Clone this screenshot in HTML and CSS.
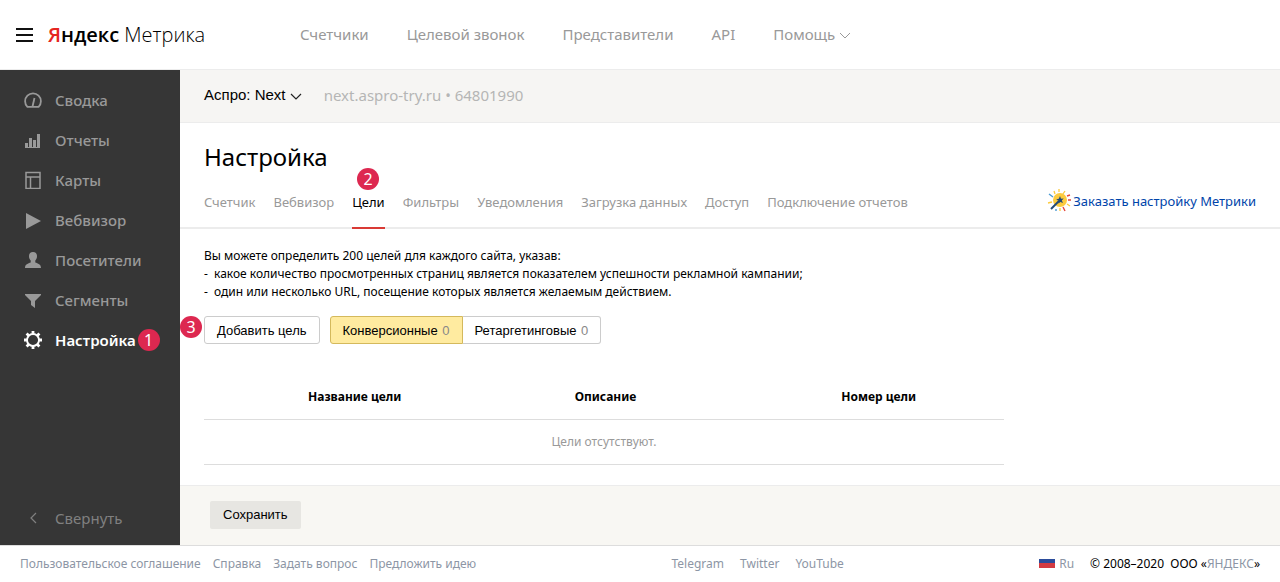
FILE: index.html
```html
<!DOCTYPE html>
<html lang="ru">
<head>
  <meta charset="UTF-8">
  <meta name="viewport" content="width=device-width, initial-scale=1.0">
  <title>Яндекс Метрика</title>

  <link rel="stylesheet" href="styles.css">
</head>
<body>
  <header class="header">
    <button class="burger" type="button" aria-label="Меню">
      <svg width="17" height="16" viewBox="0 0 17 16"><path d="M0 2h17M0 8h17M0 14h17" stroke="#111" stroke-width="2"/></svg>
    </button>
    <a class="logo" href="#"><b><span class="logo-red">Я</span>ндекс</b> Метрика</a>
    <nav class="top-nav">
      <a href="#">Счетчики</a>
      <a href="#">Целевой звонок</a>
      <a href="#">Представители</a>
      <a href="#">API</a>
      <a href="#">Помощь <svg class="arrow" width="12" height="7" viewBox="0 0 12 7"><path d="M1 1l5 5 5-5" fill="none" stroke="#999" stroke-width="1"/></svg></a>
    </nav>
  </header>

  <div class="layout">
    <aside class="sidebar">
      <a class="side-item" href="#">
        <svg class="icon" viewBox="0 0 18 18"><path d="M3.400 15.800A7.900 7.900 0 1 1 14.600 15.800Z" fill="none" stroke="currentColor" stroke-width="1.800" stroke-linejoin="round"/><path d="M8.500 15.500l2-8.500" stroke="currentColor" stroke-width="1.800"/></svg>
        Сводка
      </a>
      <a class="side-item" href="#">
        <svg class="icon" viewBox="0 0 18 18"><path d="M1 12h3v5H1zM5 7h3v10H5zM9 9h3v8H9zM13 3h3v14h-3zM1 16h15v1H1z" fill="currentColor"/></svg>
        Отчеты
      </a>
      <a class="side-item" href="#">
        <svg class="icon" viewBox="0 0 18 18"><path d="M2 1.500h14v16H2zM2 6h14M6.500 6v11" fill="none" stroke="currentColor" stroke-width="1.500"/></svg>
        Карты
      </a>
      <a class="side-item" href="#">
        <svg class="icon" viewBox="0 0 18 18"><path d="M2 2l15 8-15 8z" fill="currentColor"/></svg>
        Вебвизор
      </a>
      <a class="side-item" href="#">
        <svg class="icon" viewBox="0 0 18 18"><path d="M9 1c2.600 0 4 1.700 4 4.200 0 2.200-.9 3.300-1.700 4.300v2c2.500 1 5.700 1.500 5.700 5.500H1c0-4 3.200-4.500 5.700-5.500v-2C5.900 8.500 5 7.400 5 5.200 5 2.700 6.400 1 9 1z" fill="currentColor"/></svg>
        Посетители
      </a>
      <a class="side-item" href="#">
        <svg class="icon" viewBox="0 0 18 18"><path d="M1 3h16v1l-6 6v7l-4-3v-4L1 4z" fill="currentColor"/></svg>
        Сегменты
      </a>
      <a class="side-item active" href="#">
        <svg class="icon" viewBox="0 0 18 18"><circle cx="9" cy="9" r="6" fill="none" stroke="currentColor" stroke-width="1.900"/><path d="M9 0v3M9 15v3M0 9h3M15 9h3M2.600 2.600l2 2M13.400 13.400l2 2M15.400 2.600l-2 2M4.600 13.400l-2 2" stroke="currentColor" stroke-width="2.800"/></svg>
        <span>Настройка</span>
        <span class="step">1</span>
      </a>
      <button class="side-item collapse" type="button">
        <svg class="icon" viewBox="0 0 18 18"><path d="M12 4L7 9l5 5" fill="none" stroke="currentColor" stroke-width="1.200"/></svg>
        Свернуть
      </button>
    </aside>

    <main class="main">
      <div class="counter-bar">
        <button class="counter" type="button">Аспро: Next <svg class="arrow" width="12" height="7" viewBox="0 0 12 7"><path d="M1 1l5 5 5-5" fill="none" stroke="#222" stroke-width="1.200"/></svg></button>
        <span class="counter-info">next.aspro-try.ru • 64801990</span>
      </div>

      <h1 class="title">Настройка</h1>
      <div class="tabs-row">
        <nav class="tabs">
          <a href="#">Счетчик</a>
          <a href="#">Вебвизор</a>
          <a class="current" href="#">Цели<span class="step step-tab">2</span></a>
          <a href="#">Фильтры</a>
          <a href="#">Уведомления</a>
          <a href="#">Загрузка данных</a>
          <a href="#">Доступ</a>
          <a href="#">Подключение отчетов</a>
        </nav>
        <a class="order" href="#">
          <svg width="24" height="24" viewBox="0 0 24 24"><circle cx="13" cy="11" r="7" fill="#fccb3f"/><path d="M12 0v3M18 2l-2 3M1 14l4-1M7 2l1 3M13 19v3M20 15l3 2" stroke="#fccb3f" stroke-width="1.300"/><path d="M23 6l-3 1M21 11h3M18 22l-2-4" stroke="#e5483d" stroke-width="1.400"/><path d="M2 5l4 3M9 20v2" stroke="#4a9ad4" stroke-width="1.400"/><path d="M4 20l8-8" stroke="#234a75" stroke-width="2"/><path d="M13 7l1 2.700 2.700-.3-1.900 2 1.200 2.500-2.600-1-2 1.600.1-2.700-2.300-1.400 2.600-.7z" fill="#234a75"/></svg>
          Заказать настройку Метрики
        </a>
      </div>

      <section class="content">
        <p class="intro">Вы можете определить 200 целей для каждого сайта, указав:</p>
        <ul class="intro-list">
          <li>какое количество просмотренных страниц является показателем успешности рекламной кампании;</li>
          <li>один или несколько URL, посещение которых является желаемым действием.</li>
        </ul>
        <div class="controls">
          <span class="step step-add">3</span>
          <button class="btn" type="button">Добавить цель</button>
          <div class="switch">
            <button class="btn checked" type="button">Конверсионные <span class="count">0</span></button>
            <button class="btn" type="button">Ретаргетинговые <span class="count">0</span></button>
          </div>
        </div>
        <table class="goals">
          <thead>
            <tr><th>Название цели</th><th>Описание</th><th>Номер цели</th></tr>
          </thead>
          <tbody>
            <tr><td colspan="3">Цели отсутствуют.</td></tr>
          </tbody>
        </table>
      </section>

      <div class="save-bar">
        <button class="save" type="button">Сохранить</button>
      </div>
    </main>
  </div>

  <footer class="footer">
    <nav class="footer-links">
      <a href="#">Пользовательское соглашение</a>
      <a href="#">Справка</a>
      <a href="#">Задать вопрос</a>
      <a href="#">Предложить идею</a>
    </nav>
    <nav class="footer-links social">
      <a href="#">Telegram</a>
      <a href="#">Twitter</a>
      <a href="#">YouTube</a>
    </nav>
    <div class="footer-right">
      <a class="lang" href="#"><span class="flag"></span>Ru</a>
      <span>© 2008–2020&nbsp; ООО «<a href="#">ЯНДЕКС</a>»</span>
    </div>
  </footer>
</body>
</html>
```

FILE: styles.css
```css
* {
  margin: 0;
  padding: 0;
  box-sizing: border-box;
}

body {
  min-height: 100vh;
  display: flex;
  flex-direction: column;
  background: #fff;
  color: #000;
  font-family: "Noto Sans", sans-serif;
  font-size: 12px;
}

a {
  color: inherit;
  text-decoration: none;
}

button {
  border: none;
  background: none;
  font-family: "Liberation Sans", Arial, sans-serif;
  cursor: pointer;
}

/* Header */
.header {
  display: flex;
  align-items: center;
  height: 70px;
  padding-left: 16px;
  border-bottom: 1px solid #ececec;
}

.burger {
  display: flex;
  margin-right: 15px;
}

.logo {
  flex: 0 0 252px;
  font-family: "Open Sans", sans-serif;
  font-size: 20px;
  font-weight: 300;
  white-space: nowrap;
}

.logo b {
  font-weight: 600;
}

.logo-red {
  color: #e52620;
}

.top-nav {
  display: flex;
  gap: 38px;
  padding-bottom: 1px;
  color: #999;
  font-size: 15px;
  white-space: nowrap;
}

.arrow {
  vertical-align: middle;
}

/* Sidebar */
.layout {
  display: flex;
  flex: 1;
}

.sidebar {
  display: flex;
  flex-direction: column;
  flex: 0 0 180px;
  padding: 10px 0 7px;
  background: #363636;
}

.side-item {
  display: flex;
  align-items: center;
  height: 40px;
  padding-left: 24px;
  color: #999;
  font-family: "Noto Sans", sans-serif;
  font-size: 15px;
  font-weight: 500;
}

.side-item.active {
  color: #fff;
  font-weight: 600;
}

.icon {
  width: 18px;
  height: 18px;
  margin-right: 13px;
}

.side-item.collapse {
  margin-top: auto;
  color: #808080;
  font-weight: 400;
}

/* Numbered step badges */
.step {
  display: flex;
  justify-content: center;
  align-items: center;
  width: 22px;
  height: 22px;
  border-radius: 50%;
  background: #dd2850;
  color: #fff;
  font-size: 16px;
  font-weight: 400;
}

.side-item .step {
  margin-left: 2px;
}

/* Main column */
.main {
  display: flex;
  flex: 1;
  flex-direction: column;
  min-width: 0;
}

.counter-bar {
  display: flex;
  align-items: center;
  gap: 22px;
  height: 53px;
  padding: 0 24px 3px;
  border-bottom: 1px solid #ececec;
  background: #f6f5f3;
}

.counter {
  font-size: 15px;
}

.counter-info {
  color: #b5b5b5;
  font-size: 15px;
}

.title {
  padding: 17px 24px 1px;
  font-size: 24px;
  font-weight: 400;
  line-height: 34px;
}

.tabs-row {
  display: flex;
  justify-content: space-between;
  padding: 0 24px;
  border-bottom: 2px solid #ececec;
}

.tabs {
  display: flex;
  gap: 18px;
  color: #999;
  font-size: 13px;
  white-space: nowrap;
}

.tabs a {
  position: relative;
  height: 54px;
  margin-bottom: -2px;
  line-height: 54px;
}

.tabs .current {
  border-bottom: 2px solid #d93a35;
  color: #000;
}

.step-tab {
  position: absolute;
  top: -7px;
  left: 5px;
}

.order {
  display: flex;
  align-items: center;
  gap: 2px;
  height: 52px;
  color: #04a;
  font-size: 13px;
  white-space: nowrap;
}

.content {
  padding: 18px 24px 20px;
}

.intro,
.intro-list {
  line-height: 18px;
}

.intro-list {
  list-style: none;
}

.intro-list li::before {
  content: "-";
  display: inline-block;
  width: 10px;
}

/* Buttons */
.controls {
  position: relative;
  display: flex;
  gap: 10px;
  margin-top: 15px;
}

.step-add {
  position: absolute;
  top: 0;
  left: -24px;
}

.btn {
  height: 28px;
  padding: 0 12px;
  border: 1px solid #ccc;
  border-radius: 3px;
  background: #fff;
  font-size: 13px;
}

.switch {
  display: flex;
}

.switch .btn {
  border-left: none;
  border-radius: 0 3px 3px 0;
}

.switch .checked {
  border: 1px solid #d4b95c;
  border-radius: 3px 0 0 3px;
  background: #ffeba0;
}

.count {
  margin-left: 1px;
  color: #888;
}

/* Goals table */
.goals {
  width: 800px;
  max-width: 100%;
  margin-top: 30px;
  border-collapse: collapse;
  table-layout: fixed;
}

.goals th,
.goals td {
  height: 45px;
  border-bottom: 1px solid #ddd;
}

.goals th {
  padding-left: 104px;
  text-align: left;
}

.goals td {
  color: #999;
  text-align: center;
}

.save-bar {
  flex: 1;
  padding: 15px 30px;
  border-top: 1px solid #ececec;
  background: #f8f7f3;
}

.save {
  height: 28px;
  padding: 0 13px;
  border-radius: 2px;
  background: #e7e6e2;
  font-size: 13px;
}

/* Footer */
.footer {
  display: flex;
  justify-content: space-between;
  align-items: center;
  height: 37px;
  padding: 0 20px 2px;
  border-top: 1px solid #ddd;
  white-space: nowrap;
}

.footer-links {
  display: flex;
  gap: 12px;
}

.footer-links.social {
  gap: 16px;
}

.footer a {
  color: #8d96a5;
}

.footer-right {
  display: flex;
  gap: 16px;
}

.lang {
  display: flex;
  align-items: center;
  gap: 4px;
}

.flag {
  width: 16px;
  height: 9px;
  background: linear-gradient(#2b4c9b 50%, #d33b42 50%);
}
```
